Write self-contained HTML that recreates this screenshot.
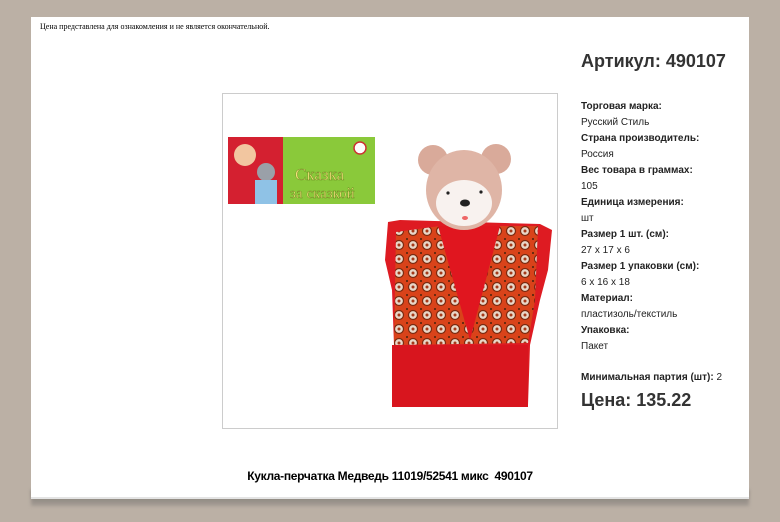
<!DOCTYPE html>
<html><head><meta charset="utf-8"><style>
body{margin:0;width:780px;height:522px;background:#bbb0a5;position:relative;overflow:hidden;font-family:"Liberation Sans",Arial,sans-serif;color:#222}
.shadow{position:absolute;left:31px;top:490px;width:718px;height:16px;background:linear-gradient(#7d7873,#a49c94);filter:blur(1.5px)}
.card{position:absolute;left:31px;top:17px;width:718px;height:480px;background:#fff;border-bottom:2px solid #e4e4e4}
.note{position:absolute;left:40px;top:22px;font:8px "Liberation Serif",serif;color:#000}
.box{position:absolute;left:222px;top:93px;width:334px;height:334px;border:1px solid #ccc;background:#fff}
.art{position:absolute;left:581px;top:51px;font-size:18px;font-weight:bold;color:#333}
.info{position:absolute;left:581px;top:99px;font-size:10px;line-height:16px;color:#222}
.info b{font-weight:bold}
.min{position:absolute;left:581px;top:372px;font-size:10px}
.price{position:absolute;left:581px;top:390px;font-size:18px;font-weight:bold;color:#333}
.title{position:absolute;left:0;width:780px;text-align:center;top:469px;font-size:12px;color:#000;font-weight:bold;letter-spacing:-0.3px}
svg{position:absolute;left:0;top:0}
</style></head><body>
<div class="shadow"></div>
<div class="card"></div>
<div class="note">Цена представлена для ознакомления и не является окончательной.</div>
<div class="box"></div>
<svg width="780" height="522">
<defs><pattern id="p" width="14" height="14" patternUnits="userSpaceOnUse"><rect width="14" height="14" fill="#d9431a"/><circle cx="7" cy="7" r="4.5" fill="#e9d7c8" stroke="#7a2a10" stroke-width="1.2"/><circle cx="7" cy="7" r="1.5" fill="#a43a1a"/><rect x="-1" y="-1" width="3" height="3" fill="#6a2a10"/></pattern></defs>
<rect x="228" y="137" width="147" height="67" fill="#8ac93a"/>
<rect x="228" y="137" width="55" height="67" fill="#d42030"/>
<circle cx="245" cy="155" r="11" fill="#f2c6a0"/>
<circle cx="266" cy="172" r="9" fill="#9aa0a8"/>
<rect x="255" y="180" width="22" height="24" fill="#8fc2e6"/>
<text x="295" y="180" font-family="Liberation Serif,serif" font-size="17" fill="#f3e27a" stroke="#6a8a20" stroke-width=".4">Сказка</text>
<text x="290" y="198" font-family="Liberation Serif,serif" font-size="15" fill="#f3e27a" stroke="#6a8a20" stroke-width=".4">за сказкой</text>
<circle cx="360" cy="148" r="6" fill="#fff" stroke="#c33" stroke-width="1.5"/>
<path d="M388 222 L400 220 L540 224 L552 230 L548 270 L540 300 L530 345 L528 405 L392 407 L394 345 L392 290 L385 260 Z" fill="#de1b22"/>
<path d="M396 232 L440 226 L505 226 L538 226 L535 300 L528 343 L394 345 Z" fill="url(#p)"/>
<path d="M438 226 L500 226 L470 340 Z" fill="#e0161f"/>
<rect x="392" y="345" width="136" height="62" fill="#d8151e"/>
<circle cx="433" cy="160" r="15" fill="#d9aa9a"/>
<circle cx="496" cy="159" r="15" fill="#d9aa9a"/>
<ellipse cx="464" cy="190" rx="38" ry="40" fill="#dfb5a6"/>
<ellipse cx="464" cy="203" rx="28" ry="23" fill="#f8f2ef"/>
<circle cx="448" cy="193" r="1.6" fill="#222"/><circle cx="481" cy="192" r="1.6" fill="#222"/>
<ellipse cx="465" cy="203" rx="5" ry="3.5" fill="#222"/>
<ellipse cx="465" cy="218" rx="3" ry="2" fill="#e66"/>
</svg>
<div class="art">Артикул: 490107</div>
<div class="info"><b>Торговая марка:</b><br>Русский Стиль<br><b>Страна производитель:</b><br>Россия<br><b>Вес товара в граммах:</b><br>105<br><b>Единица измерения:</b><br>шт<br><b>Размер 1 шт. (см):</b><br>27 х 17 х 6<br><b>Размер 1 упаковки (см):</b><br>6 х 16 х 18<br><b>Материал:</b><br>пластизоль/текстиль<br><b>Упаковка:</b><br>Пакет</div>
<div class="min"><b>Минимальная партия (шт):</b> 2</div>
<div class="price">Цена: 135.22</div>
<div class="title">Кукла-перчатка Медведь 11019/52541 микс&nbsp; 490107</div>
</body></html>
